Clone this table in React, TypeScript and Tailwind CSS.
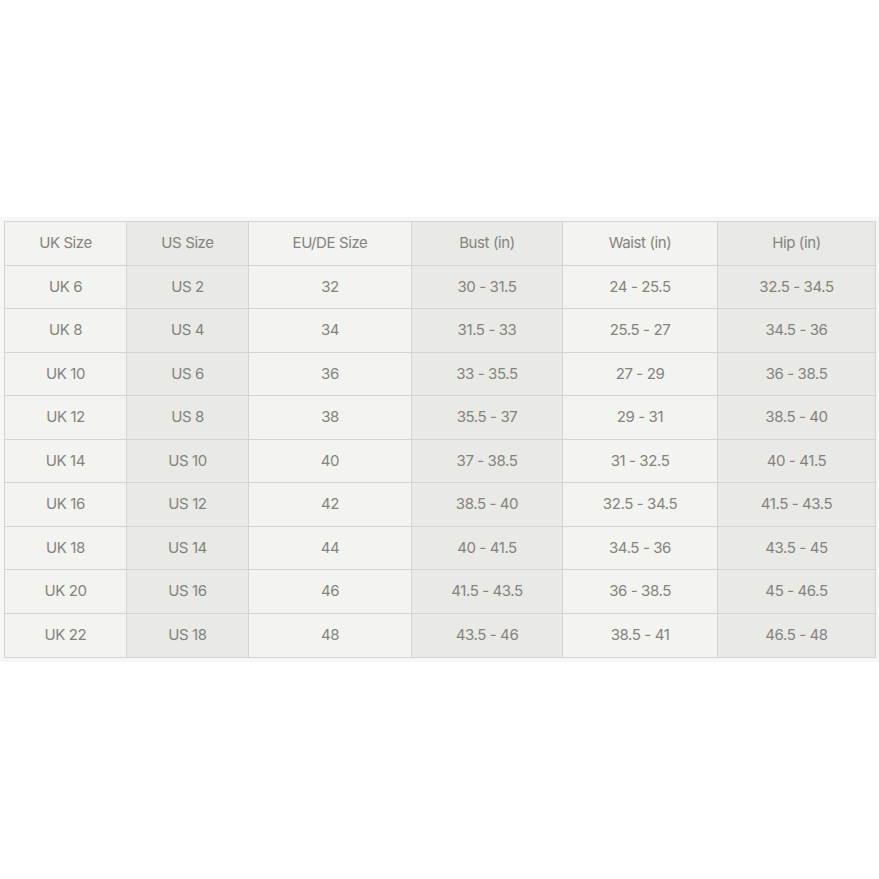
import React from 'react';

const headers = ['UK Size', 'US Size', 'EU/DE Size', 'Bust (in)', 'Waist (in)', 'Hip (in)'];

const rows = [
    ['UK 6', 'US 2', '32', '30 - 31.5', '24 - 25.5', '32.5 - 34.5'],
    ['UK 8', 'US 4', '34', '31.5 - 33', '25.5 - 27', '34.5 - 36'],
    ['UK 10', 'US 6', '36', '33 - 35.5', '27 - 29', '36 - 38.5'],
    ['UK 12', 'US 8', '38', '35.5 - 37', '29 - 31', '38.5 - 40'],
    ['UK 14', 'US 10', '40', '37 - 38.5', '31 - 32.5', '40 - 41.5'],
    ['UK 16', 'US 12', '42', '38.5 - 40', '32.5 - 34.5', '41.5 - 43.5'],
    ['UK 18', 'US 14', '44', '40 - 41.5', '34.5 - 36', '43.5 - 45'],
    ['UK 20', 'US 16', '46', '41.5 - 43.5', '36 - 38.5', '45 - 46.5'],
    ['UK 22', 'US 18', '48', '43.5 - 46', '38.5 - 41', '46.5 - 48'],
];

// column widths + alternating shade, light / dark
const cols = [
    'w-[122px] bg-[#f3f3ef]',
    'w-[122px] bg-[#e9e9e5]',
    'w-[163px] bg-[#f3f3ef]',
    'w-[151px] bg-[#e9e9e5]',
    'w-[155px] bg-[#f3f3ef]',
    'w-[157px] bg-[#e9e9e5]',
];

const Row = ({ cells, tall = false }: { cells: string[]; tall?: boolean }) => (
    <div className={`flex border-b border-[#d3d3cf] last:border-b-0 ${tall ? 'h-[44px]' : 'h-[43.5px]'}`}>
        {cells.map((c, i) => (
            <div
                key={i}
                className={`${cols[i]} shrink-0 flex items-center justify-center border-r border-[#d3d3cf] last:border-r-0`}
            >
                {c}
            </div>
        ))}
    </div>
);

export default function App() {
    return (
        <div className="w-[879px] h-[879px] bg-white flex flex-col justify-center">
            <div className="bg-[#f7f7f4] pl-[4px] pr-[3px] py-[4px]">
                <div
                    className="border border-[#d3d3cf] text-[15px] text-[#838380] tracking-[-0.4px]"
                    style={{ fontFamily: 'Inter, "Liberation Sans", sans-serif' }}
                >
                    <Row cells={headers} tall />
                    {rows.map((r, i) => (
                        <Row key={i} cells={r} />
                    ))}
                </div>
            </div>
        </div>
    );
}
